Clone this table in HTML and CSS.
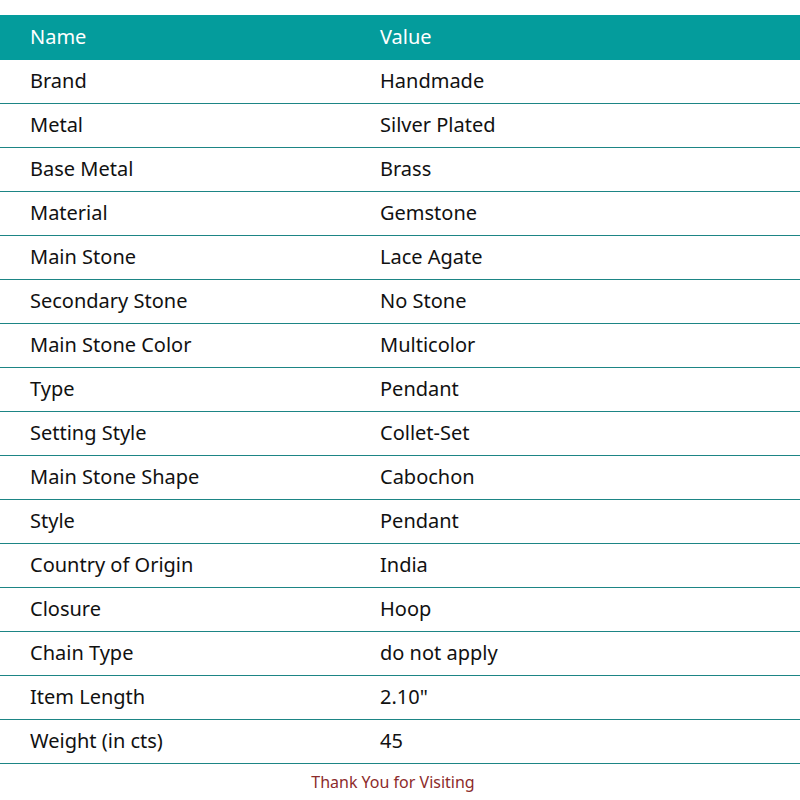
FILE: index.html
```html
<!DOCTYPE html>
<html>
<head>
<meta charset="utf-8">
<link rel="stylesheet" href="styles.css">
</head>
<body>
<div class="page">
<table class="specs">
<thead>
<tr><th class="c1">Name</th><th class="c2">Value</th></tr>
</thead>
<tbody>
<tr><td class="c1">Brand</td><td class="c2">Handmade</td></tr>
<tr><td class="c1">Metal</td><td class="c2">Silver Plated</td></tr>
<tr><td class="c1">Base Metal</td><td class="c2">Brass</td></tr>
<tr><td class="c1">Material</td><td class="c2">Gemstone</td></tr>
<tr><td class="c1">Main Stone</td><td class="c2">Lace Agate</td></tr>
<tr><td class="c1">Secondary Stone</td><td class="c2">No Stone</td></tr>
<tr><td class="c1">Main Stone Color</td><td class="c2">Multicolor</td></tr>
<tr><td class="c1">Type</td><td class="c2">Pendant</td></tr>
<tr><td class="c1">Setting Style</td><td class="c2">Collet-Set</td></tr>
<tr><td class="c1">Main Stone Shape</td><td class="c2">Cabochon</td></tr>
<tr><td class="c1">Style</td><td class="c2">Pendant</td></tr>
<tr><td class="c1">Country of Origin</td><td class="c2">India</td></tr>
<tr><td class="c1">Closure</td><td class="c2">Hoop</td></tr>
<tr><td class="c1">Chain Type</td><td class="c2">do not apply</td></tr>
<tr><td class="c1">Item Length</td><td class="c2">2.10"</td></tr>
<tr><td class="c1">Weight (in cts)</td><td class="c2">45</td></tr>
</tbody>
</table>
<div class="footer">Thank You for Visiting</div>
</div>
</body>
</html>
```
FILE: styles.css
```css
html, body {
  margin: 0;
  padding: 0;
  background: #ffffff;
}
.page {
  padding-top: 15px;
  font-family: "Noto Sans", "Open Sans", sans-serif;
}
.specs {
  width: 800px;
  border-collapse: collapse;
  table-layout: fixed;
}
.specs th, .specs td {
  text-align: left;
  font-size: 20px;
  font-weight: 400;
  padding: 0 0 3px 30px;
  vertical-align: middle;
}
.specs .c1 { width: 320px; }
.specs th {
  background: #049c9c;
  color: #ffffff;
  height: 42px;
}
.specs td {
  color: #111111;
  height: 40px;
  border-bottom: 1px solid #1d8585;
}
.footer {
  text-align: center;
  color: #8c2b2b;
  font-size: 16px;
  line-height: 36px;
  padding-right: 14px;
}
```
